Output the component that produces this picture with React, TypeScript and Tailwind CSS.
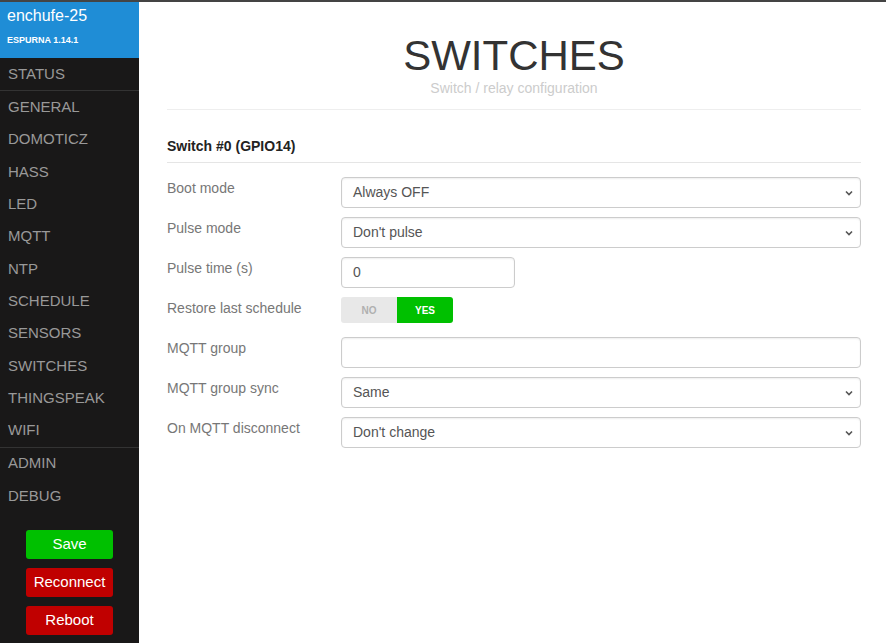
import { useState } from "react";

const menu = [
  "STATUS",
  "GENERAL",
  "DOMOTICZ",
  "HASS",
  "LED",
  "MQTT",
  "NTP",
  "SCHEDULE",
  "SENSORS",
  "SWITCHES",
  "THINGSPEAK",
  "WIFI",
  "ADMIN",
  "DEBUG",
];

const Chevron = () => (
  <svg
    width="10"
    height="10"
    viewBox="0 0 10 10"
    className="pointer-events-none absolute right-[6px] top-1/2 -translate-y-1/2"
  >
    <path d="M2 3.5 L5 6.5 L8 3.5" fill="none" stroke="#555" strokeWidth="1.6" />
  </svg>
);

const SelectBox = ({ value }: { value: string }) => (
  <div className="relative h-[31px] w-full rounded-[4px] border border-[#ccc] bg-white shadow-[inset_0_1px_2px_#eee]">
    <span className="flex h-full items-center pl-[11px] text-[14px] text-[#555]">{value}</span>
    <Chevron />
  </div>
);

const TextBox = ({ value, wide }: { value: string; wide?: boolean }) => (
  <div
    className={`h-[31px] rounded-[4px] border border-[#ccc] bg-white shadow-[inset_0_1px_2px_#eee] ${
      wide ? "w-full" : "w-[174px]"
    }`}
  >
    <span className="flex h-full items-center pl-[11px] text-[14px] text-[#555]">{value}</span>
  </div>
);

const Row = ({ label, children }: { label: string; children: React.ReactNode }) => (
  <div className="flex h-[40px] items-start">
    <div className="w-[174px] pt-[1px] text-[14px] text-[#777]">{label}</div>
    <div className="flex flex-1">{children}</div>
  </div>
);

export default function App() {
  const [restore, setRestore] = useState(true);

  return (
    <div
      className="flex h-screen w-full overflow-hidden border-t-2 border-[#444]"
      style={{ fontFamily: '"Liberation Sans", Arial, sans-serif' }}
    >
      {/* sidebar */}
      <nav className="flex w-[139px] shrink-0 flex-col bg-[#191818]">
        <div className="h-[56px] bg-[#1f8dd6] pl-[7px] pt-[4px] text-white">
          <div className="text-[16px] leading-[20px]">enchufe-25</div>
          <div className="mt-[8px] text-[9px] font-bold leading-[12px]">ESPURNA 1.14.1</div>
        </div>
        <div className="flex flex-col">
          {menu.map((item, i) => {
            const sep = i === 1 || i === 12;
            return (
              <div
                key={item}
                className={`flex items-center pl-[8px] text-[15px] text-[#999] ${
                  sep ? "h-[33.3px] border-t border-[#333]" : "h-[32.3px]"
                }`}
              >
                {item}
              </div>
            );
          })}
        </div>
        <div className="mt-[18px] flex flex-col items-center gap-[9px]">
          <button className="h-[29px] w-[87px] rounded-[3px] bg-[#00c000] text-[15px] text-white">Save</button>
          <button className="h-[29px] w-[87px] rounded-[3px] bg-[#c00000] text-[15px] text-white">
            Reconnect
          </button>
          <button className="h-[29px] w-[87px] rounded-[3px] bg-[#c00000] text-[15px] text-white">Reboot</button>
        </div>
      </nav>

      {/* main */}
      <main className="flex-1 bg-white px-[28px] pr-[25px]">
        <div className="border-b border-[#eee] pb-[13px] pt-[33px] text-center">
          <h1 className="text-[42px] leading-[42px] text-[#333]">SWITCHES</h1>
          <div className="mt-[3px] text-[14px] leading-[16px] text-[#ccc]">Switch / relay configuration</div>
        </div>

        <div className="mt-[26px] border-b border-[#e5e5e5] pb-[5px] text-[14px] font-bold text-[#222]">
          Switch #0 (GPIO14)
        </div>

        <div className="mt-[14px] flex flex-col">
          <Row label="Boot mode">
            <SelectBox value="Always OFF" />
          </Row>
          <Row label="Pulse mode">
            <SelectBox value="Don't pulse" />
          </Row>
          <Row label="Pulse time (s)">
            <TextBox value="0" />
          </Row>
          <Row label="Restore last schedule">
            <div className="flex h-[26px] cursor-pointer text-[10px] font-bold" onClick={() => setRestore(!restore)}>
              <div
                className={`flex w-[56px] items-center justify-center rounded-l-[3px] ${
                  restore ? "bg-[#e8e8e8] text-[#b0b0b0]" : "bg-[#c00000] text-white"
                }`}
              >
                NO
              </div>
              <div
                className={`flex w-[56px] items-center justify-center rounded-r-[3px] ${
                  restore ? "bg-[#00c000] text-white" : "bg-[#e8e8e8] text-[#b0b0b0]"
                }`}
              >
                YES
              </div>
            </div>
          </Row>
          <Row label="MQTT group">
            <TextBox value="" wide />
          </Row>
          <Row label="MQTT group sync">
            <SelectBox value="Same" />
          </Row>
          <Row label="On MQTT disconnect">
            <SelectBox value="Don't change" />
          </Row>
        </div>
      </main>
    </div>
  );
}
